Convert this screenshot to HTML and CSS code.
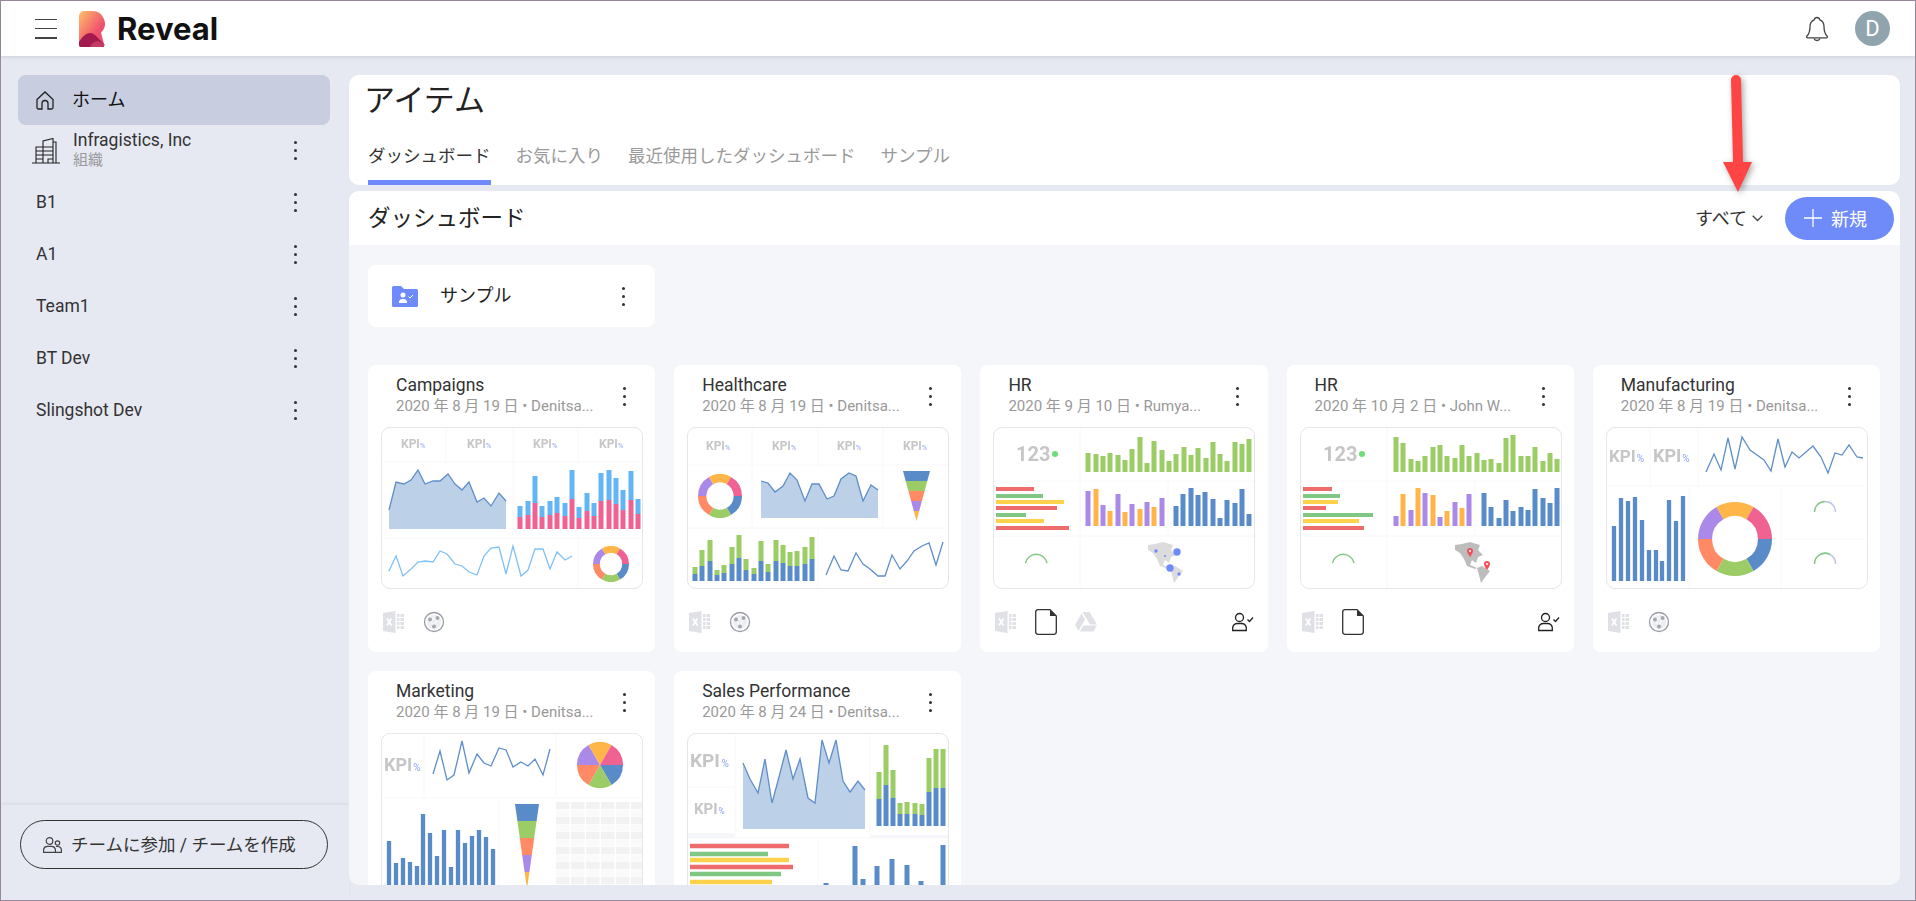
FILE: index.html
```html
<!DOCTYPE html>
<html lang="ja">
<head>
    <meta charset="UTF-8">
    <title>Reveal</title>
    <link rel="stylesheet" href="styles.css">
</head>
<body>

<!-- shared shapes for the thumbnails and the card footers -->
<svg class="defs" width="0" height="0">
    <symbol id="donut" viewBox="0 0 100 100">
        <g class="ring">
            <path class="c-blue" d="M90.500 50A40.500 40.500 0 0 1 70.250 85.070"/>
            <path class="c-green" d="M70.250 85.070A40.500 40.500 0 0 1 29.750 85.070"/>
            <path class="c-coral" d="M29.750 85.070A40.500 40.500 0 0 1 9.500 50"/>
            <path class="c-purple" d="M9.500 50A40.500 40.500 0 0 1 29.750 14.930"/>
            <path class="c-orange" d="M29.750 14.930A40.500 40.500 0 0 1 70.250 14.930"/>
            <path class="c-pink" d="M70.250 14.930A40.500 40.500 0 0 1 90.500 50"/>
        </g>
    </symbol>
    <symbol id="pie" viewBox="0 0 100 100">
        <path class="f-blue" d="M50 50H100A50 50 0 0 1 75 93.300Z"/>
        <path class="f-green" d="M50 50 75 93.300A50 50 0 0 1 25 93.300Z"/>
        <path class="f-coral" d="M50 50 25 93.300A50 50 0 0 1 0 50Z"/>
        <path class="f-purple" d="M50 50H0A50 50 0 0 1 25 6.700Z"/>
        <path class="f-orange" d="M50 50 25 6.700A50 50 0 0 1 75 6.700Z"/>
        <path class="f-pink" d="M50 50 75 6.700A50 50 0 0 1 100 50Z"/>
    </symbol>
    <symbol id="funnel" viewBox="0 0 50 100" preserveAspectRatio="none">
        <polygon class="f-blue" points="0,0 50,0 45,20 5,20"/>
        <polygon class="f-green" points="5,20 45,20 40,40 10,40"/>
        <polygon class="f-coral" points="10,40 40,40 35,60 15,60"/>
        <polygon class="f-purple" points="15,60 35,60 30,80 20,80"/>
        <polygon class="f-orange" points="20,80 30,80 25,100"/>
    </symbol>
    <g id="americas">
        <path d="M155 118l7-1 8-2 10 3-2 5 5 5-5 2-2 6-4-3-2 5 7 3-2 1-8-3-3-7-4-6-5-3z"/>
        <path d="M177 141l5-2 8 5-4 5-5 7-2-8z"/>
    </g>
    <symbol id="i-excel" viewBox="0 0 22 22">
        <path class="excel-sheet" d="M0 2 12.500 0v22L0 20z"/>
        <path class="excel-x" d="M4 7.500l4.500 7M8.500 7.500 4 14.500"/>
        <path class="excel-grid" d="M14 3h2.500v3H14zM17.500 3H21v3h-3.500zM14 7h2.500v3H14zM17.500 7H21v3h-3.500zM14 11h2.500v3H14zM17.500 11H21v3h-3.500zM14 15h2.500v3H14zM17.500 15H21v3h-3.500z"/>
    </symbol>
    <symbol id="i-globe" viewBox="0 0 22 22">
        <circle class="globe-rim" cx="11" cy="11" r="9.500"/>
        <path class="globe-fill" d="M11 4a7 7 0 1 1 0 14 7 7 0 0 1 0-14z"/>
        <path class="globe-link" d="M7 8.500 14.500 7M7 8.500l4 7M14.500 7 11 15.500"/>
        <circle class="globe-node" cx="7" cy="8.500" r="2"/>
        <circle class="globe-node" cx="14.500" cy="7" r="2"/>
        <circle class="globe-node" cx="11" cy="15.500" r="2"/>
    </symbol>
    <symbol id="i-doc" viewBox="0 0 22 26">
        <path class="doc-line" d="M3 .7h12l6.300 6.300v15.800a2.500 2.500 0 0 1-2.500 2.500H3.200a2.500 2.500 0 0 1-2.500-2.500V3.200A2.500 2.500 0 0 1 3 .7z"/>
        <path class="doc-fold" d="M15 .7 21.300 7H15z"/>
    </symbol>
    <symbol id="i-drive" viewBox="0 0 22 20">
        <path class="drive-shape" d="M7.500 0h7l7.500 12.500h-7zM6.500 1.500 10 7.500 3.500 19 0 13zM5 19.500l3.500-6H22l-3.500 6z"/>
    </symbol>
    <symbol id="i-user-check" viewBox="0 0 22 20">
        <circle class="user-line" cx="7.500" cy="5.500" r="4"/>
        <path class="user-line" d="M.7 18.500v-3a5 5 0 0 1 5-4h3.600a5 5 0 0 1 5 4v3z"/>
        <path class="user-line" d="M15.500 7.500l2 2 3.500-4"/>
    </symbol>
</svg>

<div class="app">
    <header class="topbar">
        <button class="hamburger" aria-label="メニュー"><span></span><span></span><span></span></button>
        <svg class="logo" width="26" height="36" viewBox="0 0 26 36">
            <defs>
                <linearGradient id="logoGrad" x1="0" y1="0" x2="1" y2="1">
                    <stop offset="0" stop-color="#ffc168"/>
                    <stop offset=".65" stop-color="#f0506e"/>
                </linearGradient>
            </defs>
            <path fill="url(#logoGrad)" d="M0 5a5 5 0 0 1 5-5h8a12.500 12.500 0 0 1 9 21.500L25 33a2 2 0 0 1-2 3H2a2 2 0 0 1-2-2z"/>
            <path fill="#a31b4e" d="M0 31c3-5 7-9 11-9 3 0 5 2 7 4l7 7a2 2 0 0 1-2 3H2a2 2 0 0 1-2-2z"/>
            <path fill="#c43c66" d="M11 36c1-3 5-6 8-6l6 3a2 2 0 0 1-2 3z"/>
        </svg>
        <span class="brand">Reveal</span>
        <div class="topbar-right">
            <svg class="bell" width="24" height="26" viewBox="0 0 24 26">
                <path d="M12 1.500c-1.500 0-2.500 1-2.800 2.300C6.500 4.800 5 7.300 5 10.500c0 5-1 7.500-3 9.500-.8.800-.3 1.800.7 1.800h18.600c1 0 1.500-1 .7-1.800-2-2-3-4.500-3-9.500 0-3.200-1.500-5.700-4.200-6.700-.3-1.300-1.300-2.300-2.800-2.300z"/>
                <path d="M9 22.500c.5 1.300 1.600 2 3 2s2.500-.7 3-2"/>
            </svg>
            <div class="avatar">D</div>
        </div>
    </header>

    <div class="layout">
        <aside class="sidebar">
            <nav class="nav">
                <a class="nav-item nav-home">
                    <svg class="nav-icon" width="18" height="19" viewBox="0 0 18 19">
                        <path d="M1 8.500 9 1l8 7.500v8a1.500 1.500 0 0 1-1.500 1.500H12v-5.500a3 3 0 0 0-6 0V18H2.500A1.500 1.500 0 0 1 1 16.500z"/>
                    </svg>
                    <span class="nav-label">ホーム</span>
                </a>
                <a class="nav-item nav-org">
                    <svg class="nav-icon-org" width="28" height="26" viewBox="0 0 28 26">
                        <path d="M0 25h28M4 25V9h7M11 25V3l10-2.500V25M21 4h3v21M4 13h7M4 17h7M4 21h7M11 9h10M11 13h10M11 17h10M16 25v-4h5"/>
                    </svg>
                    <span class="org-text">
                        <span class="org-name">Infragistics, Inc</span>
                        <span class="org-sub">組織</span>
                    </span>
                    <span class="kebab"></span>
                </a>
                <a class="nav-item"><span class="nav-team">B1</span><span class="kebab"></span></a>
                <a class="nav-item"><span class="nav-team">A1</span><span class="kebab"></span></a>
                <a class="nav-item"><span class="nav-team">Team1</span><span class="kebab"></span></a>
                <a class="nav-item"><span class="nav-team">BT Dev</span><span class="kebab"></span></a>
                <a class="nav-item"><span class="nav-team">Slingshot Dev</span><span class="kebab"></span></a>
            </nav>
            <div class="sidebar-foot">
                <button class="team-btn">
                    <svg width="19" height="16" viewBox="0 0 19 16">
                        <circle cx="6.500" cy="4" r="3.300"/>
                        <path d="M.6 15.400v-3a4 4 0 0 1 4-3h3.800a4 4 0 0 1 4 3v3z"/>
                        <circle cx="14.500" cy="6" r="2.200"/>
                        <path d="M13 9.500h2a3.500 3.500 0 0 1 3.400 3v2.900h-6"/>
                    </svg>
                    チームに参加 / チームを作成
                </button>
            </div>
        </aside>

        <main class="main">
            <section class="panel-top">
                <h1 class="page-title">アイテム</h1>
                <div class="tabs">
                    <a class="tab active">ダッシュボード</a>
                    <a class="tab">お気に入り</a>
                    <a class="tab">最近使用したダッシュボード</a>
                    <a class="tab">サンプル</a>
                </div>
            </section>

            <section class="panel-body">
                <div class="body-head">
                    <h2 class="body-title">ダッシュボード</h2>
                    <div class="filter">すべて
                        <svg width="11" height="7" viewBox="0 0 11 7"><path d="M.7.8 5.500 5.500 10.300.8"/></svg>
                    </div>
                    <button class="new-btn">
                        <svg width="18" height="18" viewBox="0 0 18 18"><path d="M9 0v18M0 9h18"/></svg>
                        新規
                    </button>
                </div>

                <div class="body-content">
                    <div class="folder-card">
                        <svg class="folder-icon" width="26" height="21" viewBox="0 0 26 21">
                            <path class="folder-shape" d="M0 1.500A1.500 1.500 0 0 1 1.500 0H9l3 3h12.500A1.500 1.500 0 0 1 26 4.500v15a1.500 1.500 0 0 1-1.500 1.500h-23A1.500 1.500 0 0 1 0 19.500z"/>
                            <circle class="folder-mark" cx="11" cy="9" r="2.500"/>
                            <path class="folder-mark" d="M7 17v-1.500a3 3 0 0 1 3-2.500h2a3 3 0 0 1 3 2.500V17z"/>
                            <path class="folder-tick" d="M16.500 10.500l1.500 1.500 3-3"/>
                        </svg>
                        <span class="folder-name">サンプル</span>
                        <span class="kebab"></span>
                    </div>

                    <div class="card-grid">
                        <article class="card">
                            <div class="card-head">
                                <div class="card-text">
                                    <div class="card-title">Campaigns</div>
                                    <div class="card-sub">2020 年 8 月 19 日 • Denitsa...</div>
                                </div>
                                <span class="kebab"></span>
                            </div>
                            <div class="thumb">
                                <svg viewBox="0 0 262 162" width="262" height="162">
                                    <path class="grid" d="M65 0V35M132 0V111M197 0V35M0 35H262M0 111H262M197 111V162"/>
                                    <text class="kpi" x="20" y="21" font-size="12">KPI<tspan class="pct" font-size="7">%</tspan></text>
                                    <text class="kpi" x="86" y="21" font-size="12">KPI<tspan class="pct" font-size="7">%</tspan></text>
                                    <text class="kpi" x="152" y="21" font-size="12">KPI<tspan class="pct" font-size="7">%</tspan></text>
                                    <text class="kpi" x="218" y="21" font-size="12">KPI<tspan class="pct" font-size="7">%</tspan></text>
                                    <path class="area" d="M8 83 15 55 23 57 30 53 37 43 44 57 52 54 59 54 67 47 74 57 81 63 88 55 96 75 103 71 110 79 118 66 125 74V102H8Z"/>
                                    <path class="area-top" d="M8 83 15 55 23 57 30 53 37 43 44 57 52 54 59 54 67 47 74 57 81 63 88 55 96 75 103 71 110 79 118 66 125 74"/>
                                    <path class="bar s-pink" d="M139 102V90M147 102V88M154 102V76M161 102V90M169 102V88M176 102V86M184 102V89M191 102V72M198 102V91M206 102V84M213 102V89M220 102V74M228 102V73M235 102V77M242 102V83M250 102V73M257 102V87"/>
                                    <path class="bar s-sky" d="M139 90V79M147 88V74M154 76V49M161 90V79M169 88V74M176 86V70M184 89V76M191 72V43M198 91V80M206 84V66M213 89V76M220 74V46M228 73V43M235 77V51M242 83V63M250 73V44M257 87V72"/>
                                    <path class="line l-sky" d="M8 144 15 129 22 149 30 142 37 135 44 134 52 135 59 124 66 127 74 137 81 139 88 145 96 148 103 129 110 121 118 120 125 147 132 119 140 149 147 143 154 122 162 122 169 142 176 125 184 133 191 129"/>
                                    <use href="#donut" x="212" y="119" width="36" height="36"/>
                                </svg>
                            </div>
                            <div class="card-foot">
                                <svg class="ico" width="22" height="22"><use href="#i-excel"/></svg>
                                <svg class="ico" width="22" height="22"><use href="#i-globe"/></svg>
                            </div>
                        </article>

                        <article class="card">
                            <div class="card-head">
                                <div class="card-text">
                                    <div class="card-title">Healthcare</div>
                                    <div class="card-sub">2020 年 8 月 19 日 • Denitsa...</div>
                                </div>
                                <span class="kebab"></span>
                            </div>
                            <div class="thumb">
                                <svg viewBox="0 0 262 162" width="262" height="162">
                                    <path class="grid" d="M65 0V101M131 0V38M196 0V101M0 38H262M0 101H262M131 101V162"/>
                                    <text class="kpi" x="19" y="23" font-size="12">KPI<tspan class="pct" font-size="7">%</tspan></text>
                                    <text class="kpi" x="85" y="23" font-size="12">KPI<tspan class="pct" font-size="7">%</tspan></text>
                                    <text class="kpi" x="150" y="23" font-size="12">KPI<tspan class="pct" font-size="7">%</tspan></text>
                                    <text class="kpi" x="216" y="23" font-size="12">KPI<tspan class="pct" font-size="7">%</tspan></text>
                                    <use href="#donut" x="11" y="47" width="44" height="44"/>
                                    <path class="area" d="M74 54 81 56 88 65 96 59 103 46 110 53 118 74 125 57 132 57 140 72 147 69 154 52 162 46 169 49 176 74 184 58 191 63V91H74Z"/>
                                    <path class="area-top" d="M74 54 81 56 88 65 96 59 103 46 110 53 118 74 125 57 132 57 140 72 147 69 154 52 162 46 169 49 176 74 184 58 191 63"/>
                                    <use href="#funnel" x="216" y="44" width="27" height="50"/>
                                    <path class="bar s-blue" d="M8 154V147M15 154V139M23 154V134M30 154V148M37 154V146M45 154V137M52 154V131M59 154V143M67 154V147M74 154V134M81 154V145M89 154V134M96 154V136M103 154V139M110 154V139M118 154V137M125 154V132"/>
                                    <path class="bar s-green" d="M8 147V140M15 139V123M23 134V113M30 148V143M37 146V138M45 137V120M52 131V108M59 143V132M67 147V141M74 134V114M81 145V137M89 134V113M96 136V118M103 139V125M110 139V124M118 137V120M125 132V110"/>
                                    <path class="line l-blue" d="M139 148 147 129 154 143 161 144 169 126 176 137 183 142 191 149 198 149 205 128 213 142 220 134 227 124 235 119 242 116 249 138 256 115"/>
                                </svg>
                            </div>
                            <div class="card-foot">
                                <svg class="ico" width="22" height="22"><use href="#i-excel"/></svg>
                                <svg class="ico" width="22" height="22"><use href="#i-globe"/></svg>
                            </div>
                        </article>

                        <article class="card">
                            <div class="card-head">
                                <div class="card-text">
                                    <div class="card-title">HR</div>
                                    <div class="card-sub">2020 年 9 月 10 日 • Rumya...</div>
                                </div>
                                <span class="kebab"></span>
                            </div>
                            <div class="thumb">
                                <svg viewBox="0 0 262 162" width="262" height="162">
                                    <path class="grid" d="M87 0V162M175 54V109M0 54H262M0 109H262"/>
                                    <text class="kpi" x="23" y="34" font-size="20">123</text>
                                    <circle class="dot-green" cx="62" cy="27" r="3"/>
                                    <path class="bar s-green" d="M95 45V26M103 45V27M110 45V29M117 45V26M125 45V28M132 45V33M139 45V22M147 45V10M154 45V36M161 45V14M169 45V23M176 45V34M183 45V27M191 45V20M198 45V28M205 45V21M213 45V31M220 45V15M227 45V27M234 45V34M242 45V15M249 45V17M256 45V12"/>
                                    <path class="hbar h-red" d="M3 62H41M3 81H64M3 101H76"/>
                                    <path class="hbar h-green" d="M3 69H50M3 88H33"/>
                                    <path class="hbar h-yellow" d="M3 75H71M3 94H51"/>
                                    <path class="bar s-purple" d="M95 99V64M110 99V78M125 99V67M139 99V77M154 99V75M169 99V71"/>
                                    <path class="bar s-orange" d="M103 99V62M117 99V84M132 99V85M147 99V82M161 99V80"/>
                                    <path class="bar s-blue" d="M183 99V79M190 99V67M198 99V61M205 99V68M212 99V65M220 99V72M227 99V91M234 99V73M242 99V76M249 99V62M256 99V87"/>
                                    <path class="gauge g-green" d="M32.500 136A11 11 0 0 1 54 136"/>
                                    <use class="map-light" href="#americas"/>
                                    <circle class="map-dot" cx="163" cy="124" r="1.700"/>
                                    <circle class="map-dot" cx="184" cy="125" r="3.700"/>
                                    <circle class="map-dot" cx="172" cy="129" r="1"/>
                                    <circle class="map-dot" cx="177" cy="141" r="3.700"/>
                                    <circle class="map-dot" cx="186" cy="147" r="1.700"/>
                                </svg>
                            </div>
                            <div class="card-foot">
                                <svg class="ico" width="22" height="22"><use href="#i-excel"/></svg>
                                <svg class="ico" width="22" height="26"><use href="#i-doc"/></svg>
                                <svg class="ico" width="22" height="20"><use href="#i-drive"/></svg>
                                <svg class="ico ico-end" width="22" height="20"><use href="#i-user-check"/></svg>
                            </div>
                        </article>

                        <article class="card">
                            <div class="card-head">
                                <div class="card-text">
                                    <div class="card-title">HR</div>
                                    <div class="card-sub">2020 年 10 月 2 日 • John W...</div>
                                </div>
                                <span class="kebab"></span>
                            </div>
                            <div class="thumb">
                                <svg viewBox="0 0 262 162" width="262" height="162">
                                    <path class="grid" d="M87 0V162M175 54V109M0 54H262M0 109H262"/>
                                    <text class="kpi" x="23" y="34" font-size="20">123</text>
                                    <circle class="dot-green" cx="62" cy="27" r="3"/>
                                    <path class="bar s-green" d="M96 45V10M103 45V16M111 45V32M118 45V34M125 45V29M133 45V20M140 45V18M147 45V29M155 45V31M162 45V18M169 45V29M177 45V26M184 45V33M191 45V32M199 45V36M206 45V11M213 45V8M221 45V29M228 45V29M235 45V20M243 45V34M250 45V26M257 45V32"/>
                                    <path class="hbar h-red" d="M3 62H32M3 81H26M3 101H64"/>
                                    <path class="hbar h-green" d="M3 69H40M3 88H73"/>
                                    <path class="hbar h-yellow" d="M3 75H38M3 94H59"/>
                                    <path class="bar s-purple" d="M96 99V89M111 99V83M125 99V66M140 99V90M155 99V75M169 99V67"/>
                                    <path class="bar s-orange" d="M103 99V67M118 99V61M133 99V68M147 99V84M162 99V81"/>
                                    <path class="bar s-blue" d="M184 99V66M191 99V80M199 99V91M206 99V73M213 99V84M221 99V80M228 99V83M235 99V62M243 99V71M250 99V76M257 99V61"/>
                                    <path class="gauge g-green" d="M32.500 136A11 11 0 0 1 54 136"/>
                                    <use class="map-dark" href="#americas"/>
                                    <path class="map-pin" d="M170 121a3 3 0 0 1 3 3c0 2-3 6-3 6s-3-4-3-6a3 3 0 0 1 3-3z"/>
                                    <circle class="map-pin-hole" cx="170" cy="124" r="1"/>
                                    <path class="map-pin" d="M187 134a3 3 0 0 1 3 3c0 2-3 6-3 6s-3-4-3-6a3 3 0 0 1 3-3z"/>
                                    <circle class="map-pin-hole" cx="187" cy="137" r="1"/>
                                </svg>
                            </div>
                            <div class="card-foot">
                                <svg class="ico" width="22" height="22"><use href="#i-excel"/></svg>
                                <svg class="ico" width="22" height="26"><use href="#i-doc"/></svg>
                                <svg class="ico ico-end" width="22" height="20"><use href="#i-user-check"/></svg>
                            </div>
                        </article>

                        <article class="card">
                            <div class="card-head">
                                <div class="card-text">
                                    <div class="card-title">Manufacturing</div>
                                    <div class="card-sub">2020 年 8 月 19 日 • Denitsa...</div>
                                </div>
                                <span class="kebab"></span>
                            </div>
                            <div class="thumb">
                                <svg viewBox="0 0 262 162" width="262" height="162">
                                    <path class="grid" d="M44 0V59M92 0V59M83 59V162M175 59V162M0 59H262M175 112H262"/>
                                    <text class="kpi" x="3" y="35" font-size="17">KPI<tspan class="pct" font-size="10" dx="1">%</tspan></text>
                                    <text class="kpi" x="47" y="35" font-size="18">KPI<tspan class="pct" font-size="10" dx="1">%</tspan></text>
                                    <path class="line l-blue" d="M100 45 108 27 115 43 122 11 129 42 136 10 144 23 151 28 158 33 165 44 172 12 179 40 186 25 193 31 207 19 215 30 222 46 229 26 236 28 243 18 251 30 257 31"/>
                                    <path class="bar bar-thin s-blue" d="M8 154V99M15 154V71M22 154V74M29 154V70M36 154V93M43 154V123M50 154V123M56 154V134M63 154V73M70 154V94M77 154V69"/>
                                    <use href="#donut" x="92" y="75" width="74" height="74"/>
                                    <path class="gauge g-green" d="M208.500 85A10.500 10.500 0 0 1 219 74.500"/>
                                    <path class="gauge g-light" d="M219 74.500A10.500 10.500 0 0 1 229.500 85"/>
                                    <path class="gauge g-green" d="M208.500 137A10.500 10.500 0 0 1 224 127.500"/>
                                    <path class="gauge g-light" d="M224 127.500A10.500 10.500 0 0 1 229.500 137"/>
                                </svg>
                            </div>
                            <div class="card-foot">
                                <svg class="ico" width="22" height="22"><use href="#i-excel"/></svg>
                                <svg class="ico" width="22" height="22"><use href="#i-globe"/></svg>
                            </div>
                        </article>

                        <article class="card">
                            <div class="card-head">
                                <div class="card-text">
                                    <div class="card-title">Marketing</div>
                                    <div class="card-sub">2020 年 8 月 19 日 • Denitsa...</div>
                                </div>
                                <span class="kebab"></span>
                            </div>
                            <div class="thumb">
                                <svg viewBox="0 0 262 162" width="262" height="162">
                                    <path class="grid" d="M43 0V65M175 0V65M118 65V162M0 65H262"/>
                                    <text class="kpi" x="3" y="38" font-size="18">KPI<tspan class="pct" font-size="10" dx="1">%</tspan></text>
                                    <path class="line l-blue" d="M52 41 59 18 66 47 73 42 81 8 88 40 96 21 103 30 110 33 118 15 125 17 132 34 140 29 147 33 154 26 162 42 169 16"/>
                                    <use href="#pie" x="196" y="9" width="46" height="46"/>
                                    <path class="bar bar-thin s-blue" d="M8 162V108M15 162V130M22 162V125M29 162V129M36 162V133M42 162V81M49 162V100M56 162V123M63 162V97M70 162V134M77 162V97M84 162V110M91 162V103M98 162V97M105 162V104M112 162V116"/>
                                    <use href="#funnel" x="134" y="71" width="24" height="85"/>
                                    <path class="table-row" d="M175 72.500H262M175 87.500H262M175 102.500H262M175 117.500H262M175 132.500H262M175 147.500H262"/>
                                    <path class="table-alt" d="M175 80H262M175 95H262M175 110H262M175 125H262M175 140H262M175 155H262"/>
                                </svg>
                            </div>
                        </article>

                        <article class="card">
                            <div class="card-head">
                                <div class="card-text">
                                    <div class="card-title">Sales Performance</div>
                                    <div class="card-sub">2020 年 8 月 24 日 • Denitsa...</div>
                                </div>
                                <span class="kebab"></span>
                            </div>
                            <div class="thumb">
                                <svg viewBox="0 0 262 162" width="262" height="162">
                                    <rect class="strip" x="0" y="100" width="48" height="5"/>
                                    <rect class="strip" x="183" y="102" width="79" height="3"/>
                                    <path class="grid" d="M48 0V105M183 0V105M0 54H48M0 105H262M131 105V162"/>
                                    <text class="kpi" x="3" y="34" font-size="19">KPI<tspan class="pct" font-size="10" dx="1.500">%</tspan></text>
                                    <text class="kpi" x="7" y="81" font-size="15">KPI<tspan class="pct" font-size="8.500" dx="1">%</tspan></text>
                                    <path class="area" d="M56 30 63 46 71 60 78 26 85 70 92 44 99 17 106 46 113 26 121 65 128 70 135 7 142 30 149 7 156 48 163 59 171 48 178 57V96H56Z"/>
                                    <path class="area-top" d="M56 30 63 46 71 60 78 26 85 70 92 44 99 17 106 46 113 26 121 65 128 70 135 7 142 30 149 7 156 48 163 59 171 48 178 57"/>
                                    <path class="bar s-blue" d="M192 93V66M199 93V52M206 93V65M213 93V81M220 93V81M228 93V81M235 93V82M242 93V59M249 93V55M256 93V55"/>
                                    <path class="bar s-green" d="M192 66V39M199 52V12M206 65V37M213 81V70M220 81V69M228 81V70M235 82V71M242 59V25M249 55V16M256 55V16"/>
                                    <path class="hbar hbar-wide h-red" d="M3 113H102M3 134H106"/>
                                    <path class="hbar hbar-wide h-green" d="M3 121H81M3 141H94"/>
                                    <path class="hbar hbar-wide h-yellow" d="M3 127H102M3 149H85"/>
                                    <path class="bar s-blue" d="M139 162V150M168 162V113M176 162V146M190 162V133M205 162V126M220 162V132M234 162V148M256 162V112"/>
                                </svg>
                            </div>
                        </article>
                    </div>
                </div>
            </section>
        </main>
    </div>
</div>

<!-- annotation arrow drawn over the screenshot -->
<svg class="arrow" width="36" height="124" viewBox="0 0 36 124">
    <path d="M11 7a5 5 0 0 1 10 0l2 82h9l-14 30L3 89h10z"/>
</svg>

</body>
</html>
```

FILE: styles.css
```css
* {
    box-sizing: border-box;
}

html, body {
    margin: 0;
    height: 100%;
}

body {
    font-family: Roboto, "Noto Sans CJK JP", sans-serif;
    color: #333;
    background-color: #e6e9f2;
    overflow: hidden;
}

button {
    font-family: inherit;
    cursor: pointer;
}

.defs {
    position: absolute;
}

.app {
    height: 100vh;
    display: flex;
    flex-direction: column;
    border: 1px solid #9b8a9c;
}

/* top bar */
.topbar {
    height: 55px;
    flex: none;
    display: flex;
    align-items: center;
    padding: 0 25px 0 34px;
    background-color: white;
    box-shadow: 0 1px 4px rgba(0, 0, 0, 0.12);
    position: relative;
    z-index: 2;
}

.hamburger {
    width: 22px;
    height: 20px;
    padding: 0;
    border: none;
    background: none;
    display: flex;
    flex-direction: column;
    justify-content: space-between;
}

.hamburger span {
    display: block;
    height: 1.500px;
    background-color: #444;
}

.logo {
    margin-left: 22px;
}

.brand {
    margin-left: 12px;
    font-family: Inter, sans-serif;
    font-size: 31px;
    font-weight: 700;
    color: #111;
}

.topbar-right {
    margin-left: auto;
    display: flex;
    align-items: center;
    gap: 26px;
}

.bell path {
    fill: none;
    stroke: #444;
    stroke-width: 1.300;
}

.avatar {
    width: 35px;
    height: 35px;
    border-radius: 50%;
    background-color: #90a4ae;
    color: white;
    font-size: 22px;
    display: flex;
    align-items: center;
    justify-content: center;
}

.layout {
    flex: 1;
    min-height: 0;
    display: flex;
}

/* sidebar */
.sidebar {
    width: 348px;
    flex: none;
    display: flex;
    flex-direction: column;
}

.nav {
    flex: 1;
    padding: 19px 19px 0 17px;
}

.nav-item {
    height: 52.100px;
    display: flex;
    align-items: center;
    padding: 0 33px 0 18px;
    color: #333;
    font-size: 18px;
}

.nav-home {
    height: 50px;
    background-color: #c8cde0;
    border-radius: 8px;
    color: #111;
}

.nav-icon path {
    fill: none;
    stroke: #222;
    stroke-width: 1.300;
}

.nav-label {
    margin-left: 18px;
    padding-bottom: 4px;
}

.nav-org {
    height: 51.500px;
    padding-left: 14px;
}

.nav-icon-org path {
    fill: none;
    stroke: #222;
    stroke-width: 1.100;
}

.org-text {
    margin-left: 13px;
    padding-bottom: 3px;
    display: flex;
    flex-direction: column;
}

.org-name {
    font-size: 17.500px;
    line-height: 21px;
}

.org-sub {
    font-size: 15px;
    line-height: 18px;
    color: #9a9a9a;
}

.nav-team {
    padding-bottom: 1px;
    font-size: 17.500px;
}

/* three dots, used on nav rows and cards */
.kebab {
    width: 3px;
    height: 3px;
    margin-left: auto;
    flex: none;
    border-radius: 50%;
    background-color: #333;
    box-shadow: 0 -8px 0 #333, 0 8px 0 #333;
}

.sidebar-foot {
    padding: 15px 21px 31px 19px;
    box-shadow: 0 -2px 3px rgba(0, 0, 0, 0.05);
}

.team-btn {
    width: 100%;
    height: 49px;
    display: flex;
    align-items: center;
    gap: 9px;
    padding: 0 0 3px 22px;
    border: 1px solid #333;
    border-radius: 25px;
    background: none;
    color: #333;
    font-size: 17.500px;
    white-space: nowrap;
}

.team-btn svg {
    margin-top: 3px;
}

.team-btn circle, .team-btn path {
    fill: none;
    stroke: #444;
    stroke-width: 1.200;
}

/* main column */
.main {
    flex: 1;
    min-width: 0;
    display: flex;
    flex-direction: column;
    gap: 6px;
    padding: 19px 15px 15px 0;
}

.panel-top {
    height: 110px;
    flex: none;
    padding-left: 19px;
    background-color: white;
    border-radius: 10px;
}

.page-title {
    margin: 0 0 0 -4px;
    font-size: 31px;
    font-weight: 400;
    line-height: 52px;
    color: #222;
}

.tabs {
    margin-top: -2px;
    display: flex;
    gap: 25px;
}

.tab {
    padding: 19px 0 12px;
    font-size: 17.500px;
    line-height: 24px;
    color: #9a9a9a;
    border-bottom: 5px solid transparent;
}

.tab.active {
    color: #333;
    border-bottom-color: #6f8bfb;
}

.panel-body {
    flex: 1;
    min-height: 0;
    display: flex;
    flex-direction: column;
    background-color: #f5f6fa;
    border-radius: 10px;
    overflow: hidden;
}

.body-head {
    height: 54px;
    flex: none;
    display: flex;
    align-items: center;
    padding: 0 6px 0 19px;
    background-color: white;
}

.body-title {
    margin: 0;
    padding-bottom: 4px;
    font-size: 22.500px;
    font-weight: 400;
    color: #222;
}

.filter {
    margin-left: auto;
    padding-bottom: 3px;
    display: flex;
    align-items: center;
    gap: 5px;
    font-size: 18px;
    color: #333;
}

.filter svg {
    margin-top: 3px;
}

.filter path {
    fill: none;
    stroke: #444;
    stroke-width: 1.300;
}

.new-btn {
    width: 109px;
    height: 43px;
    margin-left: 22px;
    display: flex;
    align-items: center;
    gap: 9px;
    padding: 0 0 0 19px;
    border: none;
    border-radius: 22px;
    background-color: #6f8bf9;
    color: white;
    font-size: 18px;
}

.new-btn path {
    stroke: white;
    stroke-width: 1.300;
}

.body-content {
    padding: 20px 20px 0 19px;
}

.folder-card {
    width: 287px;
    height: 62px;
    display: flex;
    align-items: center;
    padding: 0 30px 0 24px;
    margin-bottom: 38px;
    background-color: white;
    border-radius: 8px;
}

.folder-shape {
    fill: #6f8bfb;
}

.folder-mark {
    fill: white;
}

.folder-tick {
    fill: none;
    stroke: white;
    stroke-width: 1;
}

.folder-name {
    margin-left: 22px;
    padding-bottom: 4px;
    font-size: 18px;
    color: #222;
}

/* dashboard cards */
.card-grid {
    display: grid;
    grid-template-columns: repeat(5, minmax(0, 1fr));
    gap: 19px;
}

.card {
    height: 287px;
    padding: 10px 12px 0 13px;
    background-color: white;
    border-radius: 8px;
}

.card-head {
    display: flex;
    align-items: center;
    padding: 0 17px 0 15px;
}

.card-title {
    font-size: 17.500px;
    line-height: 21px;
    color: #333;
}

.card-sub {
    font-size: 15px;
    line-height: 21px;
    color: #999;
    white-space: nowrap;
}

.thumb {
    width: 262px;
    height: 162px;
    margin-top: 10px;
    border: 1px solid #e6e6e9;
    border-radius: 9px;
    overflow: hidden;
}

.thumb svg {
    display: block;
    margin: -1px;
    filter: blur(0.3px);
}

.card-foot {
    height: 26px;
    margin-top: 20px;
    padding: 0 2px;
    display: flex;
    align-items: center;
    gap: 18px;
}

.ico-end {
    margin-left: auto;
}

/* thumbnail pieces */
.grid {
    fill: none;
    stroke: #f8f8f9;
    stroke-width: 1;
}

.kpi {
    font-weight: 700;
    fill: #c6c6c6;
}

.pct {
    font-weight: 400;
    fill: #8ea2f6;
}

.area {
    fill: #bcd0e8;
}

.area-top, .line {
    fill: none;
    stroke-width: 1.300;
}

.area-top, .l-blue {
    stroke: #5f8ec9;
}

.l-sky {
    stroke: #7fc1f8;
}

.bar {
    fill: none;
    stroke-width: 5;
}

.bar-thin {
    stroke-width: 4.300;
}

.s-pink { stroke: #f06292; }
.s-sky { stroke: #64b5f6; }
.s-blue { stroke: #5a8bc9; }
.s-green { stroke: #9ccc65; }
.s-purple { stroke: #ab89e8; }
.s-orange { stroke: #ffb547; }

.hbar {
    fill: none;
    stroke-width: 4;
}

.hbar-wide {
    stroke-width: 4.700;
}

.h-red { stroke: #ef6c6c; }
.h-green { stroke: #81c784; }
.h-yellow { stroke: #ffd24d; }

.gauge {
    fill: none;
    stroke-width: 1.500;
}

.g-green { stroke: #81c784; }
.g-light { stroke: #bcc6e8; }

.dot-green { fill: #6ddc7a; }
.map-light { fill: #dcdcdc; }
.map-dark { fill: #bdbdbd; }
.map-dot { fill: #6f8bfb; }
.map-pin { fill: #f4505c; }
.map-pin-hole { fill: white; }

.ring path {
    fill: none;
    stroke-width: 19;
}

.c-blue { stroke: #5a8bc9; }
.c-green { stroke: #9ccc65; }
.c-coral { stroke: #ff8a65; }
.c-purple { stroke: #ab89e8; }
.c-orange { stroke: #ffb547; }
.c-pink { stroke: #f06292; }

.f-blue { fill: #5a8bc9; }
.f-green { fill: #9ccc65; }
.f-coral { fill: #ff8a65; }
.f-purple { fill: #ab89e8; }
.f-orange { fill: #ffb547; }
.f-pink { fill: #f06292; }

.table-row {
    fill: none;
    stroke: #f2f2f2;
    stroke-width: 7;
    stroke-dasharray: 13.500 1.500;
}

.table-alt {
    fill: none;
    stroke: #fafafa;
    stroke-width: 7;
    stroke-dasharray: 13.500 1.500;
}

.strip {
    fill: #f5f6fa;
}

/* footer icons */
.excel-sheet, .excel-grid {
    fill: #dfe1e6;
}

.excel-x {
    fill: none;
    stroke: white;
    stroke-width: 1.600;
}

.globe-rim {
    fill: none;
    stroke: #9a9ca5;
    stroke-width: 1.300;
}

.globe-fill {
    fill: #eceef1;
}

.globe-link {
    fill: none;
    stroke: white;
    stroke-width: 1;
}

.globe-node {
    fill: #a6a8b0;
}

.doc-line {
    fill: none;
    stroke: #333;
    stroke-width: 1.300;
}

.doc-fold {
    fill: #333;
}

.drive-shape {
    fill: #dfe1e6;
}

.user-line {
    fill: none;
    stroke: #222;
    stroke-width: 1.300;
}

/* red annotation arrow */
.arrow {
    position: absolute;
    left: 1720px;
    top: 73px;
    filter: drop-shadow(2px 2px 3px rgba(0, 0, 0, 0.35));
}

.arrow path {
    fill: #ff4444;
}
```
